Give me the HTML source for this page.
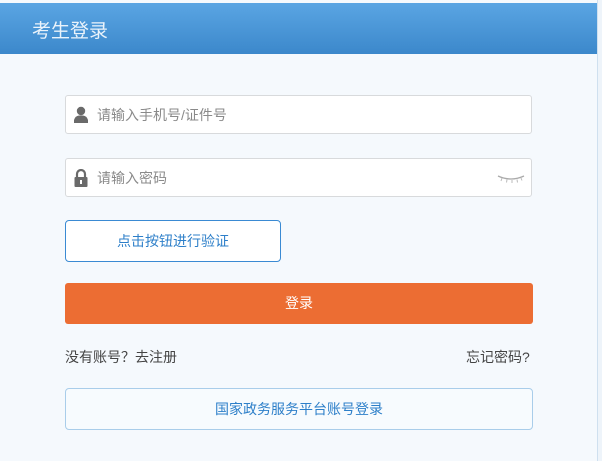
<!DOCTYPE html>
<html><head><meta charset="utf-8"><style>
html,body{margin:0;padding:0;width:602px;height:461px;overflow:hidden;background:#f5f9fd;font-family:"Liberation Sans","Noto Sans CJK SC",sans-serif;}
.hdr{position:absolute;left:0;top:3px;width:597px;height:51px;background:linear-gradient(#5aa5e3,#3c88cb);}
.hdr span{position:absolute;left:32px;top:13px;color:#eaf3fb;font-size:19px;}
.rb{position:absolute;left:597px;top:0;width:5px;height:461px;background:#eef4fa;border-left:1px solid #cfe0ef}
.inp{position:absolute;left:65px;width:467px;height:38px;background:#fff;border:1px solid #d8dadc;border-radius:3px;box-sizing:border-box;}
.inp span{position:absolute;left:31px;top:9px;font-size:14px;color:#8a8a8a;}
.btn{position:absolute;box-sizing:border-box;border-radius:4px;text-align:center;font-size:14px;}
.lk{position:absolute;top:347px;font-size:14px;color:#444;}
</style></head><body>
<div class="hdr"><span>考生登录</span></div>
<div class="rb"></div>
<div class="inp" style="top:95px;height:39px">
<svg style="position:absolute;left:7px;top:10px" width="16" height="17" viewBox="0 0 16 17"><circle cx="8" cy="5" r="4.2" fill="#6a6a6a"/><path d="M1 17 L1 14 Q2 10 6 9.5 L10 9.5 Q14 10 15 14 L15 17Z" fill="#6a6a6a"/></svg>
<span>请输入手机号/证件号</span></div>
<div class="inp" style="top:158px;height:39px">
<svg style="position:absolute;left:8px;top:10px" width="14" height="18" viewBox="0 0 14 18"><path d="M3 8 V5 A4 4 0 0 1 11 5 V8" stroke="#6a6a6a" stroke-width="2.2" fill="none"/><rect x="0.5" y="8" width="13" height="10" rx="1" fill="#6a6a6a"/><rect x="6" y="11" width="2" height="4" fill="#fff"/></svg>
<span>请输入密码</span>
<svg style="position:absolute;left:430px;top:14px" width="30" height="10" viewBox="0 0 30 10"><path d="M2 3 Q15 9 28 3" stroke="#aaa" stroke-width="1.3" fill="none"/><path d="M6 5 l-1 3 M11 6.5 l-.5 3 M16 7 l0 3 M21 6.5 l.5 3 M25 5 l1 2.5" stroke="#bbb" stroke-width="1"/></svg>
</div>
<div class="btn" style="left:65px;top:220px;width:216px;height:42px;border:1px solid #3a8ad3;background:#fff;color:#2d7fc9;line-height:40px">点击按钮进行验证</div>
<div class="btn" style="left:65px;top:283px;width:468px;height:41px;background:#ec6d33;color:#fff;line-height:41px;border-radius:3px">登录</div>
<div class="lk" style="left:65px">没有账号？去注册</div>
<div class="lk" style="left:466px">忘记密码?</div>
<div class="btn" style="left:65px;top:388px;width:468px;height:42px;border:1px solid #a9cdea;background:#f7fbfe;color:#2d7fc9;line-height:40px">国家政务服务平台账号登录</div>
</body></html>
